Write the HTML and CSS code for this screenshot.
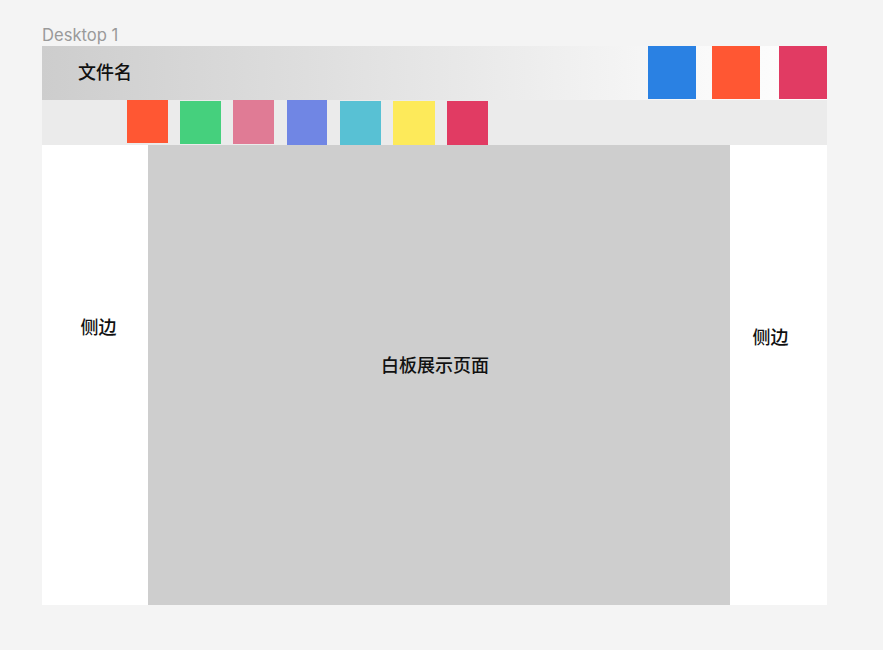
FILE: index.html
```html
<!DOCTYPE html>
<html lang="zh">
<head>
<meta charset="utf-8">
<title>Desktop 1</title>
<link rel="stylesheet" href="styles.css">
</head>
<body>
<div class="page">
  <div class="label">Desktop 1</div>
  <div class="frame">
    <div class="header">
      <div class="filename">文件名</div>
      <div class="actions">
        <div class="sq blue"></div>
        <div class="sq orange"></div>
        <div class="sq red"></div>
      </div>
    </div>
    <div class="toolbar">
      <div class="tool orange t1"></div>
      <div class="tool green t2"></div>
      <div class="tool pink t1"></div>
      <div class="tool violet t3"></div>
      <div class="tool cyan t4"></div>
      <div class="tool yellow t4"></div>
      <div class="tool red t4"></div>
    </div>
    <div class="body">
      <div class="side left"><span>侧边</span></div>
      <div class="board"><span>白板展示页面</span></div>
      <div class="side right"><span>侧边</span></div>
    </div>
  </div>
</div>
</body>
</html>
```

FILE: styles.css
```css
html, body {
  margin: 0;
  padding: 0;
  background: #f4f4f4;
  font-family: Inter, "Noto Sans CJK SC", sans-serif;
}
.page {
  padding: 25px 0 0 42px;
  width: 785px;
}
.label {
  font-size: 16.6px;
  color: #9a9a9a;
  line-height: 20px;
  height: 21px;
}
.frame {
  width: 785px;
}
.header {
  height: 54px;
  display: flex;
  align-items: stretch;
  justify-content: space-between;
  background: linear-gradient(to right, #cdcdcd 0%, #dcdcdc 30%, #ececec 60%, #fafafa 85%, #fefefe 100%);
}
.filename {
  padding-left: 36px;
  font-size: 18px;
  font-weight: 500;
  color: #111;
  line-height: 54px;
}
.actions {
  display: flex;
  gap: 16px;
  height: 53px;
}
.actions .sq { width: 48px; }
.actions .orange + .red { margin-left: 3px; }
.toolbar {
  height: 45px;
  background: #ebebeb;
  display: flex;
  align-items: flex-start;
  padding-left: 85px;
  gap: 12px;
}
.tool { width: 41px; height: 44px; margin-top: 1px; }
.t1 { margin-top: 0; height: 43px; }
.t2 { margin-top: 1px; height: 43px; }
.t3 { margin-top: 0; height: 45px; width: 40px; margin-left: 1px; }
.t4 { margin-top: 1px; height: 45px; }
.toolbar .pink { height: 44px; }
.toolbar .cyan { margin-left: 1px; }
.toolbar .yellow { width: 42px; }
.blue { background: #2a81e3; }
.orange { background: #ff5733; }
.red { background: #e13b63; }
.green { background: #45d07d; }
.pink { background: #e07b95; }
.violet { background: #7086e4; }
.cyan { background: #58c1d4; }
.yellow { background: #fdea5a; }
.body {
  display: flex;
  height: 460px;
}
.side {
  background: #ffffff;
  font-size: 18px;
  font-weight: 500;
  color: #111;
  display: flex;
  justify-content: center;
}
.side.left { width: 106px; padding-top: 172px; box-sizing: border-box; }
.side.left span { margin-left: 7px; }
.side.right { width: 97px; padding-top: 182px; box-sizing: border-box; }
.side.right span { margin-right: 16px; }
.board {
  flex: 1;
  background: #cecece;
  font-size: 18px;
  font-weight: 500;
  color: #111;
  display: flex;
  justify-content: center;
  padding-top: 210px;
  box-sizing: border-box;
}
.board span { margin-right: 8px; }
.side span, .board span { line-height: 22px; height: 22px; }
```
